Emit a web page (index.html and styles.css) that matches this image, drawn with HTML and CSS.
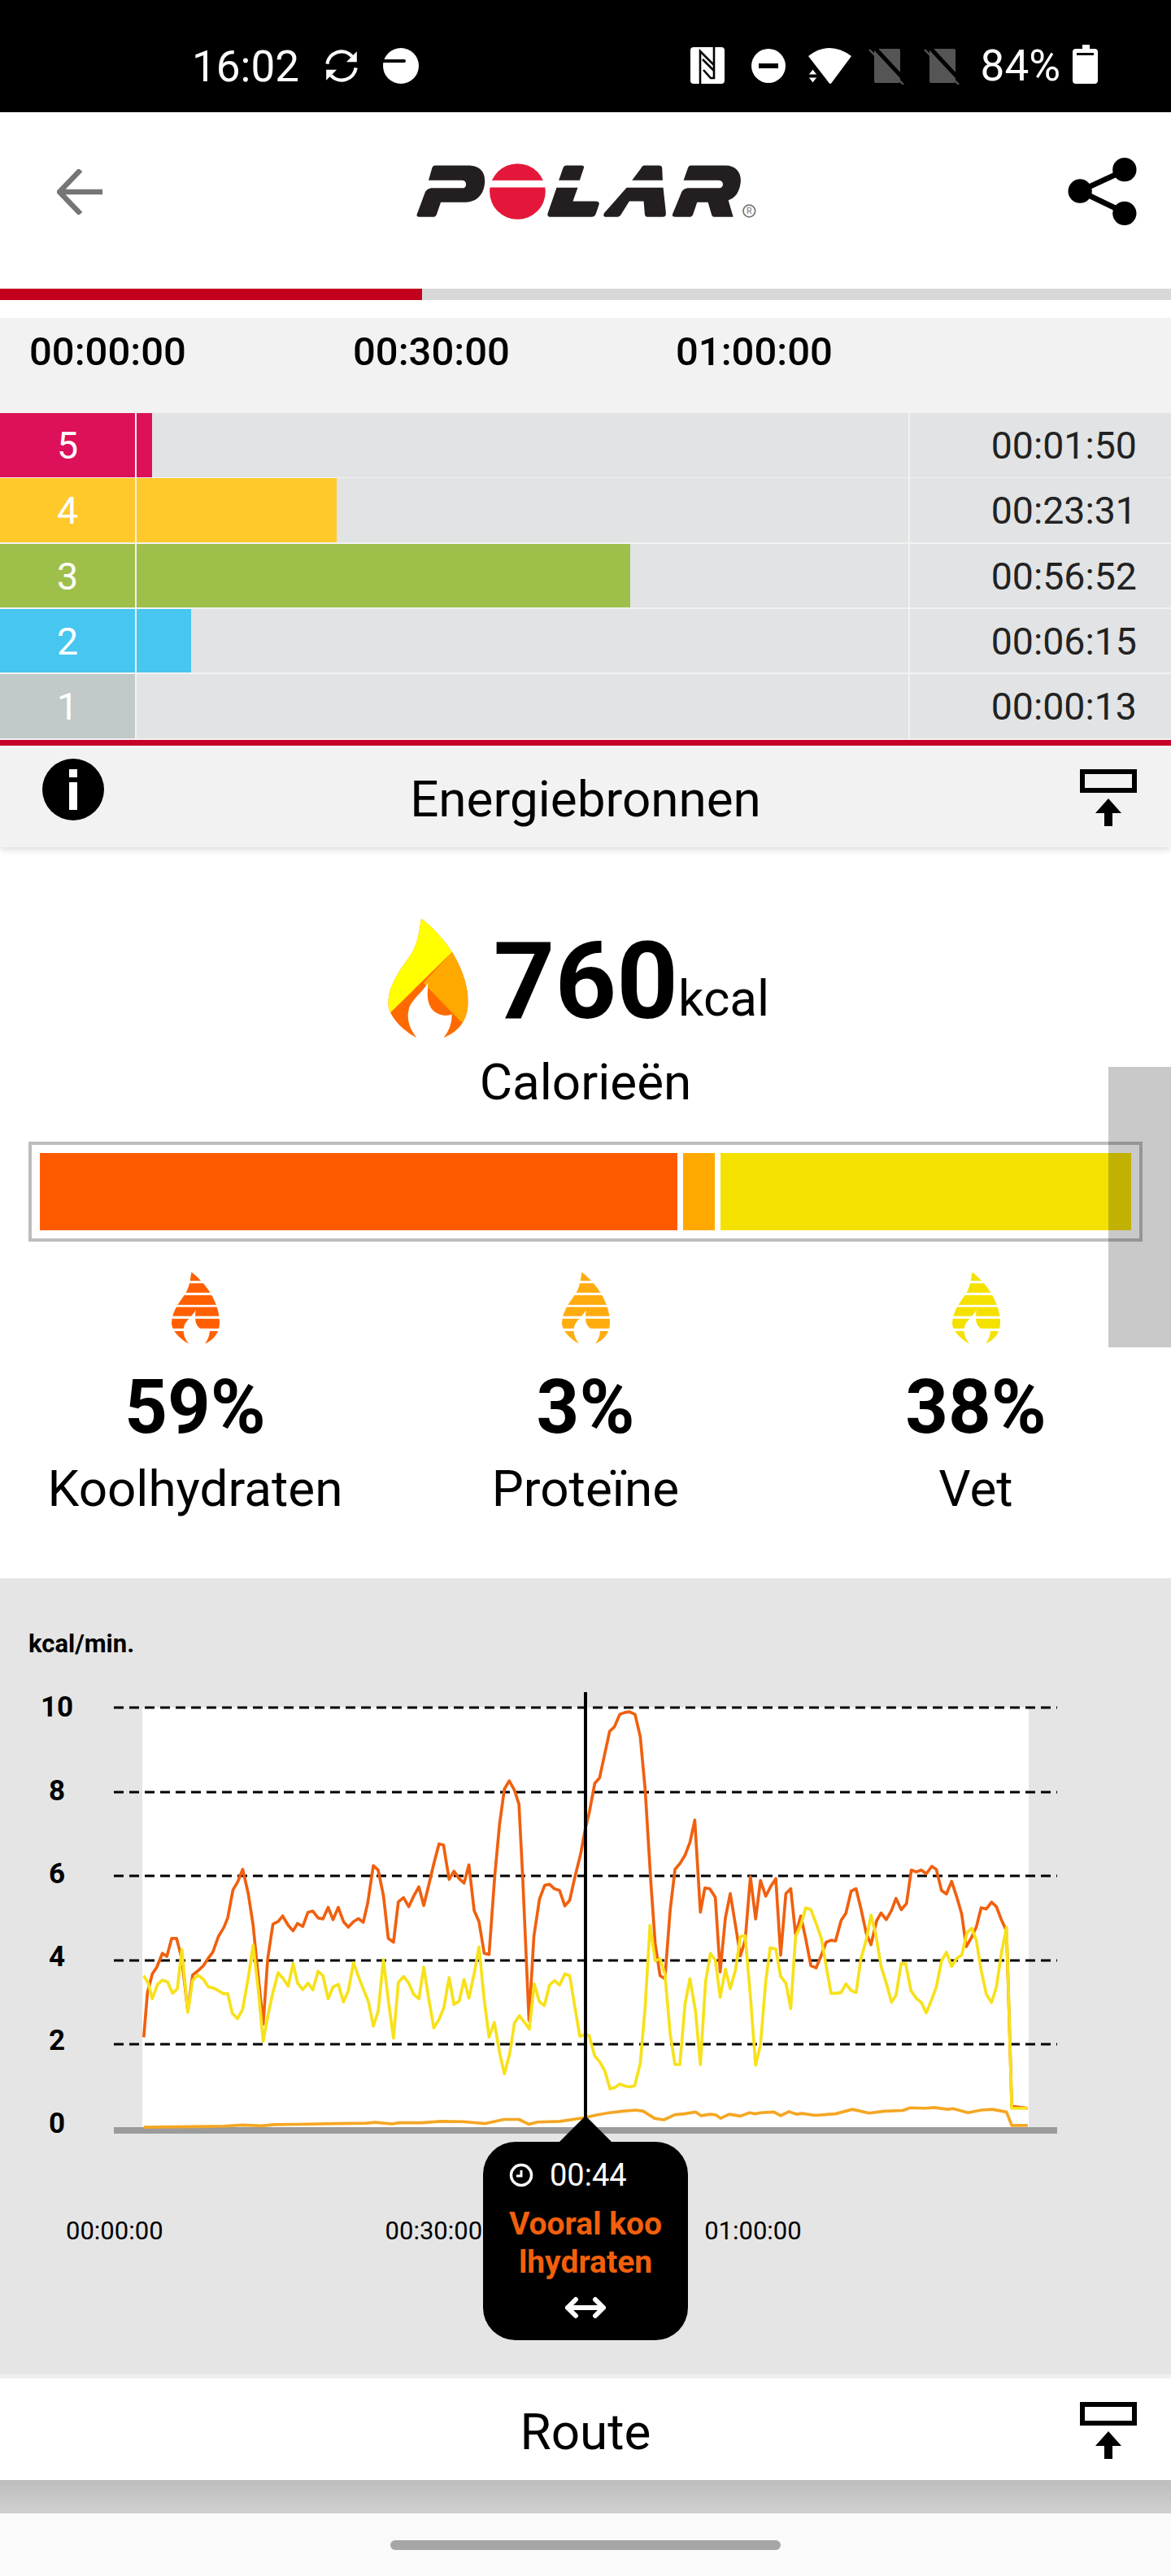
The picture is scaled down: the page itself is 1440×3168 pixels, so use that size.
FILE: index.html
```html
<!DOCTYPE html>
<html lang="nl">
<head>
    <meta charset="UTF-8">
    <meta name="viewport" content="width=device-width, initial-scale=1.0">
    <title>Polar Flow</title>
    <link rel="stylesheet" href="styles.css">
</head>
<body>
    <svg class="defs" width="0" height="0" aria-hidden="true">
        <defs>
            <path id="flamePath" d="M232 88C225 130 222 170 200 210C170 260 112 320 110 400C110 450 170 505 215 527C185 490 175 450 190 410C205 380 245 350 258 320C255 360 250 390 270 420C290 445 325 450 345 440C345 475 335 500 315 527C370 505 405 460 405 395C405 320 370 250 345 210C320 170 270 115 232 88Z"/>
            <clipPath id="flameClip"><use href="#flamePath"/></clipPath>
            <symbol id="flameStriped" viewBox="100 80 315 455">
                <use href="#flamePath" fill="currentColor"/>
                <g fill="#fff">
                    <rect x="100" y="141" width="315" height="15"/>
                    <rect x="100" y="214" width="315" height="15"/>
                    <rect x="100" y="289" width="315" height="13"/>
                    <rect x="100" y="358" width="315" height="16"/>
                    <rect x="100" y="434" width="315" height="16"/>
                </g>
            </symbol>
            <symbol id="pinIcon" viewBox="0 0 70 70">
                <rect x="3" y="3" width="64" height="23" fill="none" stroke="#000" stroke-width="6"/>
                <path d="M35 36L51 54H40V70H30V54H19Z" fill="#000"/>
            </symbol>
        </defs>
    </svg>

    <!-- status bar -->
    <div class="statusbar">
        <div class="status-group">
            <span class="status-time">16:02</span>
            <svg class="ic-sync" width="40" height="40" viewBox="3 3 34 34">
                <path d="M5 18A15 15 0 0 1 31 10M35 22A15 15 0 0 1 9 30" fill="none" stroke="#fff" stroke-width="3.6"/>
                <path d="M36 5V16H25ZM4 35V24H15Z" fill="#fff"/>
            </svg>
            <svg class="ic-saver" width="44" height="44" viewBox="0 0 44 44">
                <circle cx="22" cy="22" r="22" fill="#fff"/>
                <path d="M0 16H26" stroke="#000" stroke-width="4" stroke-linecap="round"/>
            </svg>
        </div>
        <div class="status-group">
            <svg class="ic-nfc" width="42" height="45" viewBox="0 0 42 45">
                <rect width="42" height="45" rx="4" fill="#fff"/>
                <path d="M12 45V5L29 22V29L15 15M29 0V38H25L16 28" fill="none" stroke="#000" stroke-width="2.6"/>
            </svg>
            <svg class="ic-dnd" width="42" height="44" viewBox="0 0 42 44">
                <circle cx="21" cy="22" r="21" fill="#fff"/>
                <rect x="9" y="19" width="24" height="6" fill="#000"/>
            </svg>
            <svg class="ic-wifi" width="53" height="44" viewBox="0 0 53 44">
                <path d="M0 10Q26 -10 53 10L28.500 43Q27 45 25.500 43Z" fill="#fff"/>
                <path d="M5.500 26L0 33H11ZM0 36H11L5.500 43Z" fill="#fff" stroke="#000" stroke-width="1"/>
            </svg>
            <svg class="ic-sim" width="44" height="44" viewBox="0 0 44 44">
                <rect x="7" y="0" width="32" height="42" rx="2" fill="#555"/>
                <path d="M6 -3L46 40" stroke="#000" stroke-width="5"/>
                <path d="M1 1L43 44" stroke="#555" stroke-width="2.500"/>
            </svg>
            <svg class="ic-sim ic-sim-last" width="44" height="44" viewBox="0 0 44 44">
                <rect x="7" y="0" width="32" height="42" rx="2" fill="#555"/>
                <path d="M6 -3L46 40" stroke="#000" stroke-width="5"/>
                <path d="M1 1L43 44" stroke="#555" stroke-width="2.500"/>
            </svg>
            <span class="status-batt">84%</span>
            <svg class="ic-batt" width="31" height="48" viewBox="0 0 31 48">
                <path d="M12 0H21V5H27Q31 5 31 9V44Q31 48 27 48H4Q0 48 0 44V9Q0 5 4 5H12Z" fill="#fff"/>
                <rect x="5" y="10" width="21" height="3" fill="#000"/>
            </svg>
        </div>
    </div>

    <!-- app header -->
    <header class="appbar">
        <svg class="appbar-back" width="56" height="56" viewBox="0 0 56 56">
            <path d="M56 28H4M29 1L3 28L29 55" fill="none" stroke="#757575" stroke-width="6.500"/>
        </svg>
        <svg class="logo" width="427" height="71" viewBox="80 90 1280 212" role="img" aria-label="Polar">
            <g fill="#231f20">
                <path d="M160 100H285C335 100 350 130 347 165C343 210 315 236 270 236H185L170 280Q167 290 155 290H105Q93 290 98 278L125 205C130 190 140 183 155 183H270Q278 180 278 170Q278 157 265 155H140L152 112Q155 100 165 100Z"/>
                <path d="M648 100H705Q715 100 712 110L697 155H620L635 112Q638 100 648 100ZM612 182H690L672 232H755Q772 232 768 245L757 278Q753 290 740 290H590Q575 290 580 275Z"/>
                <path d="M935 100H990Q1000 100 1001 110L1003 155H890L922 112Q928 100 935 100ZM870 182H1005L1015 275Q1016 290 1003 290H950Q938 290 937 280L933 232H880L850 280Q845 290 832 290H795Q780 290 788 275Z"/>
                <path d="M1105 100H1235C1275 100 1295 130 1290 165C1285 200 1270 220 1245 228L1263 290H1195Q1185 290 1183 280L1170 236H1130L1115 280Q1112 290 1100 290H1050Q1035 290 1040 278L1070 205C1075 190 1085 183 1100 183H1215Q1225 180 1225 170Q1225 157 1210 155H1080L1095 112Q1098 100 1108 100Z"/>
            </g>
            <circle cx="468" cy="196" r="103" fill="#e4173a"/>
            <rect x="365" y="155" width="208" height="26" fill="#fff"/>
            <circle cx="1322" cy="268" r="22" fill="none" stroke="#777" stroke-width="5"/>
            <text x="1322" y="279" class="logo-reg">R</text>
        </svg>
        <svg class="appbar-share" width="85" height="84" viewBox="0 0 86 86">
            <path d="M71 16L15 42L71 69" fill="none" stroke="#000" stroke-width="7"/>
            <circle cx="71" cy="15" r="15"/>
            <circle cx="15" cy="42" r="15"/>
            <circle cx="71" cy="70" r="15"/>
        </svg>
    </header>

    <div class="progress"><div class="progress-fill"></div></div>

    <!-- hartslagzones -->
    <div class="timeline">
        <span>00:00:00</span>
        <span>00:30:00</span>
        <span>01:00:00</span>
    </div>
    <div class="zones">
        <div class="zone zone-5">
            <div class="zone-num">5</div>
            <div class="zone-track"><div class="zone-fill" style="width: 19px"></div></div>
            <div class="zone-time">00:01:50</div>
        </div>
        <div class="zone zone-4">
            <div class="zone-num">4</div>
            <div class="zone-track"><div class="zone-fill" style="width: 246px"></div></div>
            <div class="zone-time">00:23:31</div>
        </div>
        <div class="zone zone-3">
            <div class="zone-num">3</div>
            <div class="zone-track"><div class="zone-fill" style="width: 607px"></div></div>
            <div class="zone-time">00:56:52</div>
        </div>
        <div class="zone zone-2">
            <div class="zone-num">2</div>
            <div class="zone-track"><div class="zone-fill" style="width: 67px"></div></div>
            <div class="zone-time">00:06:15</div>
        </div>
        <div class="zone zone-1">
            <div class="zone-num">1</div>
            <div class="zone-track"></div>
            <div class="zone-time">00:00:13</div>
        </div>
    </div>

    <div class="section-bar section-bar-grey">
        <svg class="section-info" width="76" height="76" viewBox="0 0 76 76">
            <circle cx="38" cy="38" r="38"/>
            <rect x="33" y="13" width="10" height="10" fill="#fff"/>
            <rect x="33" y="29" width="10" height="34" fill="#fff"/>
        </svg>
        <h2 class="section-title">Energiebronnen</h2>
        <svg class="section-pin" width="70" height="70"><use href="#pinIcon"/></svg>
    </div>

    <!-- energiebronnen -->
    <section class="energy">
        <div class="hero">
            <svg class="hero-flame" width="105" height="152" viewBox="100 80 315 455">
                <g clip-path="url(#flameClip)">
                    <rect x="100" y="80" width="315" height="455" fill="#ff6a00"/>
                    <path d="M100 452L345 212V80H100Z" fill="#ffff00"/>
                    <path d="M345 212H420V468H378L240 325Z" fill="#ffa800"/>
                </g>
            </svg>
            <div class="hero-value">760</div>
            <div class="hero-unit">kcal</div>
        </div>
        <div class="hero-label">Calorieën</div>

        <div class="energy-bar">
            <div class="energy-seg seg-carbs"></div>
            <div class="energy-seg seg-protein"></div>
            <div class="energy-seg seg-fat"></div>
        </div>

        <div class="macros">
            <div class="macro">
                <svg class="macro-flame macro-carbs" width="63" height="91"><use href="#flameStriped"/></svg>
                <div class="macro-value">59%</div>
                <div class="macro-label">Koolhydraten</div>
            </div>
            <div class="macro">
                <svg class="macro-flame macro-protein" width="63" height="91"><use href="#flameStriped"/></svg>
                <div class="macro-value">3%</div>
                <div class="macro-label">Proteïne</div>
            </div>
            <div class="macro">
                <svg class="macro-flame macro-fat" width="63" height="91"><use href="#flameStriped"/></svg>
                <div class="macro-value">38%</div>
                <div class="macro-label">Vet</div>
            </div>
        </div>
    </section>

    <!-- grafiek -->
    <section class="chart">
        <div class="chart-unit">kcal/min.</div>
        <svg class="chart-plot" width="1440" height="600" viewBox="0 100 1440 600">
            <rect x="175" y="150" width="1090" height="516" fill="#fff"/>
            <g class="chart-grid">
                <path d="M140 150H1300M140 254H1300M140 357H1300M140 461H1300M140 564H1300"/>
            </g>
            <rect x="140" y="666" width="1160" height="8" fill="#9b9b9b"/>
            <g class="chart-ylabels">
                <text x="70" y="161">10</text>
                <text x="70" y="264">8</text>
                <text x="70" y="366">6</text>
                <text x="70" y="468">4</text>
                <text x="70" y="571">2</text>
                <text x="70" y="673">0</text>
            </g>
            <!-- punten in 2.178x coordinaten -->
            <g transform="scale(0.4591)" fill="none" stroke-width="8" stroke-linejoin="round">
                <polyline stroke="#f0600f" points="385,1210 395,1090 408,1040 420,1022 435,985 447,993 460,945 473,945 487,1000 503,1140 516,1043 530,1032 545,1018 558,998 570,982 585,940 600,915 610,890 624,815 637,793 650,760 665,825 678,910 690,1030 705,1175 717,1000 731,907 745,900 757,885 772,910 785,925 797,905 811,913 825,875 838,872 852,890 865,893 879,862 892,895 906,862 920,900 933,915 947,900 960,892 973,902 985,850 1000,750 1013,762 1027,830 1040,945 1054,955 1067,847 1081,836 1095,860 1108,832 1122,807 1135,857 1149,800 1162,745 1176,692 1188,695 1203,787 1216,765 1230,785 1243,797 1256,748 1270,870 1283,900 1297,985 1310,988 1325,780 1338,640 1351,545 1364,523 1378,548 1390,585 1400,780 1417,1165 1430,940 1445,840 1459,803 1472,800 1485,812 1499,817 1513,858 1526,843 1540,780 1555,720 1568,650 1578,610 1593,530 1606,515 1620,450 1633,390 1646,378 1660,345 1673,340 1686,338 1701,345 1715,405 1728,545 1743,790 1755,960 1768,1045 1781,1053 1795,870 1808,760 1821,745 1835,722 1848,688 1861,628 1876,875 1888,810 1901,812 1916,835 1929,1035 1943,890 1956,825 1970,910 1983,992 1996,950 2010,780 2024,893 2037,790 2051,832 2065,805 2078,785 2091,990 2105,825 2118,812 2131,935 2145,885 2158,945 2172,1018 2186,1024 2200,990 2213,955 2226,950 2238,952 2253,897 2266,877 2280,818 2293,812 2306,865 2320,930 2333,962 2348,898 2360,877 2374,895 2388,870 2400,838 2414,868 2428,852 2441,762 2454,767 2468,762 2481,772 2496,752 2508,760 2522,817 2535,826 2549,792 2563,835 2576,880 2588,967 2601,945 2615,915 2628,863 2642,866 2656,848 2669,860 2683,897 2696,925 2703,1150 2710,1395 2753,1400"/>
                <polyline stroke="#f7e11a" points="385,1045 397,1065 408,1107 422,1068 435,1057 449,1062 462,1092 475,1080 487,975 503,1143 516,1058 530,1043 545,1055 558,1075 572,1078 585,1085 598,1093 610,1093 622,1145 636,1160 650,1135 665,1050 678,963 692,1085 705,1220 718,1150 731,1090 745,1037 758,1052 772,1073 785,1012 797,1065 811,1082 825,1065 838,1083 852,1033 865,1045 879,1107 892,1075 906,1068 920,1115 933,1085 947,1010 960,1047 973,1080 987,1115 1000,1180 1013,1140 1027,1002 1040,1110 1054,1212 1067,1063 1081,1047 1095,1065 1108,1095 1122,1107 1135,1022 1149,1110 1162,1185 1176,1162 1189,1130 1203,1050 1216,1122 1230,1113 1243,1055 1256,1105 1270,1040 1283,968 1297,1110 1310,1210 1324,1170 1338,1250 1351,1308 1365,1255 1378,1172 1391,1152 1405,1170 1418,1188 1431,1067 1445,1115 1458,1125 1472,1070 1485,1058 1499,1070 1513,1040 1526,1045 1540,1130 1553,1207 1568,1203 1578,1205 1593,1260 1606,1275 1620,1300 1634,1348 1646,1345 1660,1335 1673,1340 1686,1343 1700,1340 1715,1280 1728,1130 1741,910 1755,1005 1768,1000 1781,1040 1795,1200 1808,1283 1821,1283 1835,1120 1848,1053 1863,1140 1876,1283 1890,1060 1903,985 1916,1003 1929,1103 1943,1027 1956,1080 1970,1030 1983,940 1996,938 2010,1100 2024,1285 2037,1230 2051,1060 2063,970 2078,973 2091,1047 2105,1065 2118,1133 2131,940 2145,910 2158,863 2172,868 2186,905 2200,945 2213,1020 2226,1092 2240,1092 2253,1090 2266,1067 2280,1085 2293,1090 2306,1000 2320,950 2333,883 2346,935 2360,1020 2374,1065 2388,1116 2400,1097 2414,1012 2426,1013 2440,1085 2454,1105 2468,1117 2481,1145 2495,1110 2508,1075 2522,1005 2535,982 2549,1020 2563,998 2576,990 2590,930 2603,918 2615,950 2628,1030 2642,1095 2656,1117 2669,1075 2683,980 2696,915 2703,1150 2710,1400 2753,1400"/>
                <polyline stroke="#f5a623" points="385,1451 600,1448 650,1445 700,1447 735,1444 800,1443 900,1441 980,1440 1005,1438 1050,1442 1070,1439 1130,1439 1180,1435 1240,1436 1300,1441 1350,1430 1390,1430 1416,1443 1440,1437 1500,1435 1568,1425 1598,1418 1633,1412 1668,1408 1703,1405 1723,1408 1753,1427 1778,1431 1808,1417 1833,1415 1863,1410 1878,1420 1903,1416 1918,1418 1930,1427 1953,1416 1983,1421 2008,1412 2023,1415 2038,1412 2073,1410 2091,1420 2113,1409 2133,1416 2148,1414 2183,1419 2238,1415 2283,1403 2328,1413 2368,1408 2418,1406 2438,1399 2478,1400 2503,1398 2538,1403 2553,1401 2593,1412 2628,1405 2658,1403 2696,1410 2710,1446 2753,1446"/>
            </g>
            <rect x="718" y="131" width="4" height="525" fill="#000"/>
        </svg>
        <div class="chart-xlabels">
            <span>00:00:00</span>
            <span>00:30:00</span>
            <span>01:00:00</span>
        </div>

        <div class="tip">
            <div class="tip-time">
                <svg width="30" height="30" viewBox="0 0 30 30">
                    <circle cx="15" cy="15" r="12.500" fill="none" stroke="#fff" stroke-width="3.500"/>
                    <path d="M15 9V16H9" fill="none" stroke="#fff" stroke-width="3"/>
                </svg>
                <span>00:44</span>
            </div>
            <div class="tip-text">Vooral koo<br>lhydraten</div>
            <svg class="tip-arrows" width="54" height="28" viewBox="0 0 54 28">
                <path d="M5 14H49M15 4L5 14L15 24M39 4L49 14L39 24" fill="none" stroke="#fff" stroke-width="6" stroke-linecap="round" stroke-linejoin="round"/>
            </svg>
        </div>
    </section>

    <div class="section-bar section-bar-white">
        <span></span>
        <h2 class="section-title">Route</h2>
        <svg class="section-pin" width="70" height="70"><use href="#pinIcon"/></svg>
    </div>
    <div class="bottom-shadow"></div>
    <div class="navbar"><div class="nav-handle"></div></div>

    <div class="scroll-thumb"></div>
</body>
</html>
```

FILE: styles.css
```css
/* Algemeen */
body {
    position: relative;
    width: 1440px;
    height: 3168px;
    margin: 0;
    overflow: hidden;
    background-color: #fff;
    color: #000;
    font-family: Roboto, "Liberation Sans", sans-serif;
}

svg {
    display: block;
}

.defs {
    position: absolute;
}

/* Statusbalk */
.statusbar {
    display: flex;
    justify-content: space-between;
    align-items: center;
    box-sizing: border-box;
    height: 138px;
    padding: 23px 90px 0 236px;
    background-color: #000;
    color: #fff;
    font-size: 53px;
}

.status-group {
    display: flex;
    align-items: center;
}

.status-time {
    margin-top: 2px;
}

.ic-sync {
    margin-left: 32px;
}

.ic-saver {
    margin-left: 31px;
}

.ic-dnd {
    margin-left: 33px;
}

.ic-wifi {
    margin-left: 28px;
}

.ic-sim {
    margin-left: 21px;
    margin-top: 2px;
}

.ic-sim-last {
    margin-left: 24px;
}

.status-batt {
    margin-left: 26px;
}

.ic-batt {
    margin-left: 15px;
    margin-top: -4px;
}

/* Appbalk */
.appbar {
    display: grid;
    grid-template-columns: 1fr auto 1fr;
    align-items: center;
    height: 195px;
    padding: 0 42px 22px;
}

.appbar-back {
    margin-left: 28px;
}

.appbar-share {
    justify-self: end;
}

.logo-reg {
    font-size: 32px;
    fill: #777;
    text-anchor: middle;
}

.progress {
    height: 14px;
    margin-bottom: 22px;
    background-color: #d8d8d8;
}

.progress-fill {
    width: 519px;
    height: 100%;
    background-color: #c4001f;
}

/* Hartslagzones */
.timeline {
    display: grid;
    grid-template-columns: 398px 397px 1fr;
    box-sizing: border-box;
    height: 117px;
    padding: 14px 0 0 36px;
    background-color: #f2f2f2;
    font-size: 49px;
    font-weight: 500;
    line-height: 56px;
}

.zones {
    display: flex;
    flex-direction: column;
    gap: 1.75px;
    padding-bottom: 2.5px;
    border-bottom: 7px solid #c8002a;
    background-color: #f2f2f2;
}

.zone {
    display: flex;
    height: 78.5px;
    background-color: #e1e3e4;
    font-size: 46.5px;
    line-height: 80px;
}

.zone-num {
    width: 166px;
    color: #fff;
    text-align: center;
}

.zone-track {
    width: 951px;
    border-left: 2px solid #f2f2f2;
    box-sizing: border-box;
}

.zone-fill {
    height: 100%;
}

.zone-time {
    flex: 1;
    padding-right: 42px;
    border-left: 2px solid #f2f2f2;
    color: #222;
    text-align: right;
}

.zone-5 .zone-num,
.zone-5 .zone-fill {
    background-color: #dd1159;
}

.zone-4 .zone-num,
.zone-4 .zone-fill {
    background-color: #ffc92c;
}

.zone-3 .zone-num,
.zone-3 .zone-fill {
    background-color: #9fbf4b;
}

.zone-2 .zone-num,
.zone-2 .zone-fill {
    background-color: #47c6ef;
}

.zone-1 .zone-num {
    background-color: #c1c9c9;
}

/* Sectiekoppen */
.section-bar {
    display: grid;
    grid-template-columns: 1fr auto 1fr;
    box-sizing: border-box;
    height: 125px;
    padding: 6px 42px 0;
}

.section-bar-grey {
    position: relative;
    background-color: #f2f2f2;
    box-shadow: 0 3px 8px rgba(0, 0, 0, 0.14);
}

.section-bar-white {
    background-color: #fff;
}

.section-title {
    margin: 0;
    font-size: 62px;
    font-weight: 400;
    line-height: 119px;
}

.section-info {
    margin-top: 10px;
    margin-left: 10px;
}

.section-pin {
    justify-self: end;
    margin-top: 23px;
}

/* Energiebronnen */
.energy {
    height: 899px;
    padding-top: 85px;
    box-sizing: border-box;
}

.hero {
    display: flex;
    justify-content: center;
    align-items: flex-start;
    padding-right: 20px;
}

.hero-value {
    margin-top: 15px;
    margin-left: 28px;
    font-size: 132px;
    font-weight: 700;
    line-height: 130px;
}

.hero-unit {
    margin-top: 67px;
    font-size: 62px;
    line-height: 68px;
}

.hero-label {
    margin-top: 17px;
    font-size: 62px;
    line-height: 70px;
    text-align: center;
}

.energy-bar {
    display: flex;
    gap: 7px;
    height: 95px;
    margin: 38px 35px 0;
    padding: 10px;
    border: 4px solid #bdbdbd;
}

.seg-carbs {
    flex: 784;
    background-color: #ff5a00;
}

.seg-protein {
    flex: 39;
    background-color: #ffa800;
}

.seg-fat {
    flex: 505;
    background-color: #f5e100;
}

.macros {
    display: grid;
    grid-template-columns: repeat(3, 1fr);
    margin-top: 36px;
    text-align: center;
}

.macro-flame {
    margin: 0 auto;
}

.macro-carbs {
    color: #ff5f00;
}

.macro-protein {
    color: #ffac0f;
}

.macro-fat {
    color: #f5e100;
}

.macro-value {
    margin-top: 27px;
    font-size: 92px;
    font-weight: 700;
    line-height: 100px;
}

.macro-label {
    margin-top: 15px;
    font-size: 62px;
    line-height: 70px;
}

/* Grafiek */
.chart {
    position: relative;
    height: 984px;
    box-sizing: border-box;
    padding-top: 63px;
    border-bottom: 5px solid #f0f0f0;
    background-color: #e5e5e5;
}

.chart-unit {
    padding-left: 35px;
    font-size: 31px;
    font-weight: 700;
    line-height: 36px;
}

.chart-plot {
    margin-top: 10px;
}

.chart-grid path {
    fill: none;
    stroke: #000;
    stroke-width: 3;
    stroke-dasharray: 12 7;
}

.chart-ylabels text {
    font-size: 35px;
    font-weight: 700;
    text-anchor: middle;
}

.chart-xlabels {
    display: flex;
    gap: 273px;
    margin-top: 76px;
    padding-left: 81px;
    font-size: 31px;
    line-height: 36px;
}

/* Tooltip boven de grafiek */
.tip {
    position: absolute;
    top: 693px;
    left: 594px;
    width: 252px;
    height: 244px;
    border-radius: 40px;
    background-color: #000;
    color: #fff;
}

.tip::before {
    content: "";
    position: absolute;
    top: -32px;
    left: 93px;
    width: 66px;
    height: 33px;
    background-color: #000;
    clip-path: polygon(50% 0, 100% 100%, 0 100%);
}

.tip-time {
    display: flex;
    align-items: center;
    gap: 20px;
    height: 40px;
    padding: 21px 0 0 32px;
    font-size: 38px;
}

.tip-text {
    margin-top: 17px;
    color: #f2600c;
    font-size: 39px;
    font-weight: 700;
    line-height: 47px;
    text-align: center;
}

.tip-arrows {
    margin: 18px auto 0;
}

/* Onderkant */
.bottom-shadow {
    height: 41px;
    background: linear-gradient(#bdbdbd, #d0d0d0);
}

.navbar {
    display: flex;
    justify-content: center;
    height: 77px;
    padding-top: 33px;
    box-sizing: border-box;
    background-color: #fafafa;
}

.nav-handle {
    width: 480px;
    height: 12px;
    border-radius: 6px;
    background-color: #a6a6a6;
}

.scroll-thumb {
    position: absolute;
    top: 1312px;
    left: 1363px;
    width: 77px;
    height: 345px;
    background-color: rgba(0, 0, 0, 0.21);
}
```
